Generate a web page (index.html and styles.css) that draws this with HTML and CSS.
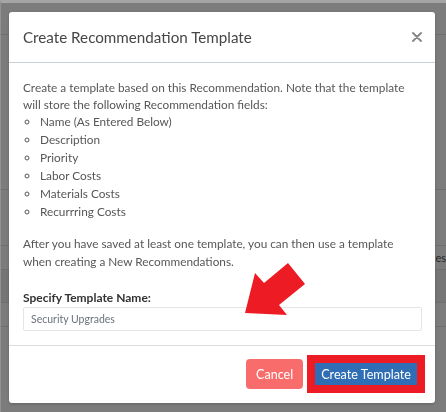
FILE: index.html
```html
<!DOCTYPE html>
<html lang="en">
<head>
    <meta charset="UTF-8">
    <meta name="viewport" content="width=device-width, initial-scale=1.0">
    <title>Create Recommendation Template</title>
    <link rel="stylesheet" href="styles.css">
</head>
<body>
    <!-- page behind the dialog -->
    <div class="page">
        <div class="page-row row-top"></div>
        <div class="page-row row-tall"></div>
        <div class="page-row row-mid"></div>
        <div class="page-row row-text"><span>es</span></div>
        <div class="page-row row-shade"></div>
        <div class="page-row row-small"></div>
    </div>

    <div class="overlay">
        <div class="modal">
            <div class="modal-header">
                <h4 class="modal-title">Create Recommendation Template</h4>
                <button class="close" aria-label="Close">
                    <svg width="10" height="10" viewBox="0 0 10 10">
                        <path d="M1 1 L9 9 M9 1 L1 9" stroke="#858585" stroke-width="1.8" stroke-linecap="round"/>
                    </svg>
                </button>
            </div>
            <div class="modal-body">
                <p class="intro">Create a template based on this Recommendation. Note that the template will store the following Recommendation fields:</p>
                <ul class="fields">
                    <li>Name (As Entered Below)</li>
                    <li>Description</li>
                    <li>Priority</li>
                    <li>Labor Costs</li>
                    <li>Materials Costs</li>
                    <li>Recurrring Costs</li>
                </ul>
                <p class="note">After you have saved at least one template, you can then use a template when creating a New Recommendations.</p>
                <label class="field-label" for="template-name">Specify Template Name:</label>
                <input class="field-input" id="template-name" type="text" value="Security Upgrades">
            </div>
            <div class="modal-footer">
                <button class="btn btn-cancel">Cancel</button>
                <button class="btn btn-create">Create Template</button>
            </div>
        </div>

        <!-- screenshot annotation -->
        <svg class="arrow" width="70" height="62" viewBox="240 258 70 62">
            <polygon points="245,313 255,273 264,283 288,263 305,284 279,305 287,315" fill="#ed1c24"/>
        </svg>
    </div>
</body>
</html>
```

FILE: styles.css
```css
body {
    margin: 0;
    font-family: Lato, "Open Sans", sans-serif;
    background: #7c7c7c;
}
.page {
    height: 412px;
    box-sizing: border-box;
    border-top: 3px solid #a5a5a5;
    border-left: 1px solid #929292;
}
.page-row {
    border-bottom: 1px solid #6f6f6f;
}
.row-top { height: 31px; }
.row-tall { height: 154px; }
.row-mid { height: 55px; }
.row-text {
    height: 23px;
    display: flex;
    justify-content: flex-end;
    align-items: center;
    font-size: 11px;
    color: #262626;
}
.row-shade {
    height: 32px;
    background: #767676;
}
.row-small { height: 23px; }

.overlay {
    position: fixed;
    top: 0;
    left: 0;
    right: 0;
    bottom: 0;
    padding: 12px 11px 0 9px;
}
.modal {
    background: white;
    border-radius: 3px;
    box-shadow: 0 1px 3px rgba(0,0,0,0.2);
}
.modal-header {
    height: 51px;
    box-sizing: border-box;
    display: flex;
    align-items: center;
    justify-content: space-between;
    padding: 0 13px 0 14px;
    border-bottom: 1px solid #c8d0d8;
}
.modal-title {
    margin: 0;
    font-size: 15.2px;
    font-weight: 400;
    color: #464646;
}
.close {
    background: none;
    border: none;
    padding: 0;
    width: 10px;
    height: 10px;
    display: flex;
    cursor: pointer;
}
.modal-body {
    padding: 17px 13px 14px 14px;
    font-size: 11.8px;
    line-height: 18px;
    color: #575757;
}
.intro {
    margin: 0;
    line-height: 16.5px;
}
.fields {
    margin: 0 0 14px 0;
    padding-left: 17px;
    list-style: circle;
}
.note {
    margin: 0 0 18px 0;
}
.field-label {
    display: block;
    font-size: 12px;
    font-weight: 700;
    color: #333;
}
.field-input {
    display: block;
    width: 100%;
    height: 24px;
    box-sizing: border-box;
    border: 1px solid #e3e6e9;
    border-radius: 2px;
    padding: 0 7px;
    font-family: Lato, "Open Sans", sans-serif;
    font-size: 10.5px;
    color: #6b7178;
}
.modal-footer {
    display: flex;
    justify-content: flex-end;
    gap: 8px;
    padding: 13px 14px 14px;
    border-top: 1px solid #dcdcdc;
}
.btn {
    height: 30px;
    padding: 0 10px;
    border: none;
    border-radius: 4px;
    font-family: Lato, "Open Sans", sans-serif;
    font-size: 12.6px;
    color: white;
    cursor: pointer;
}
.btn-cancel {
    background: #f86d6c;
}
.btn-create {
    background: #2f6db4;
    border-radius: 0;
    box-shadow: inset 0 0 0 4px #ed1c24, 0 0 0 4px #ed1c24;
}
.arrow {
    position: absolute;
    left: 240px;
    top: 258px;
    pointer-events: none;
}
```
